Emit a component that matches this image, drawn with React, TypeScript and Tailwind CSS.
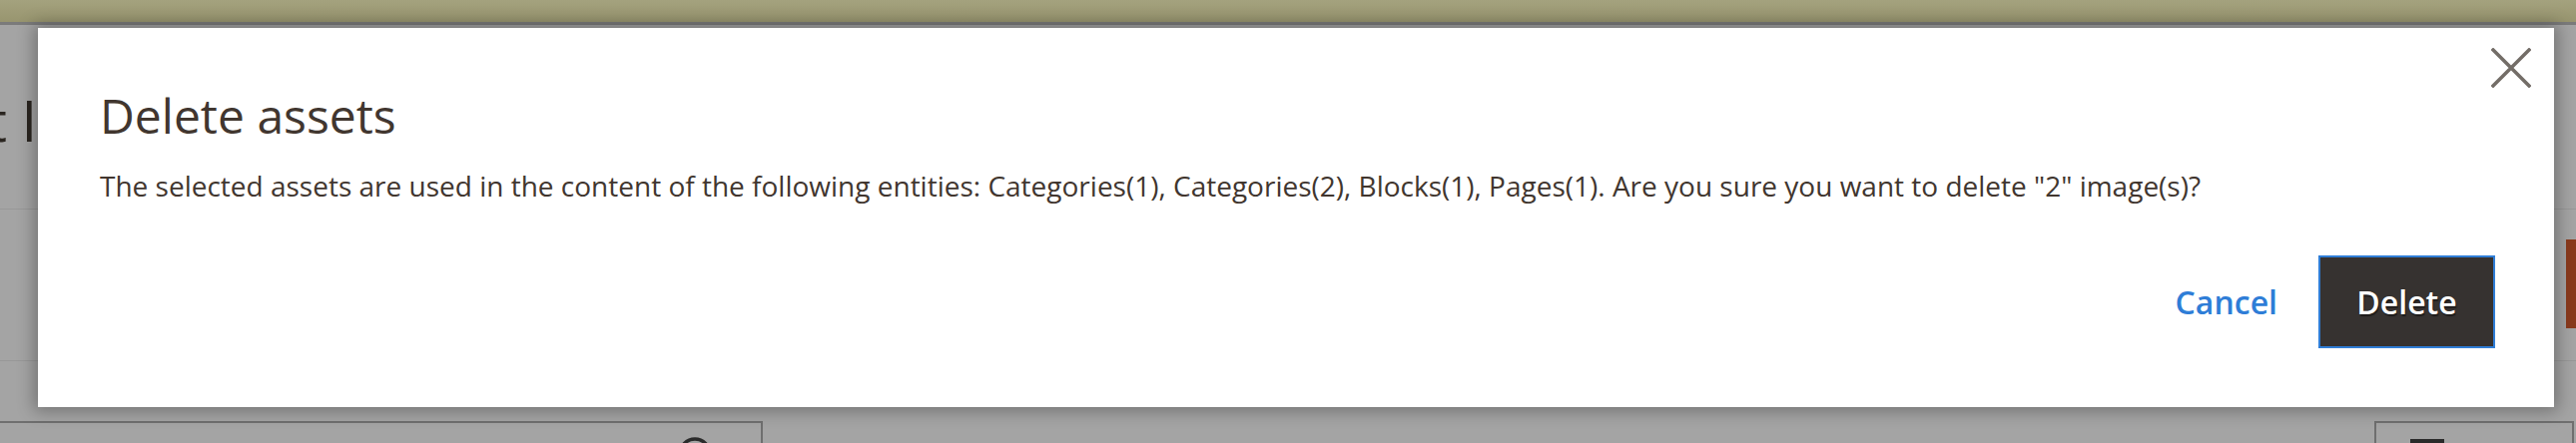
const font = { fontFamily: '"Open Sans", "Liberation Sans", sans-serif' };

const CloseIcon = () => (
  <svg width="40" height="40" viewBox="0 0 40 40" fill="none">
    <path d="M2 2L38 38M38 2L2 38" stroke="#736d67" strokeWidth="3.5" strokeLinecap="square" />
  </svg>
);

const BackgroundPage = () => (
  <div className="flex h-[444px] flex-col overflow-hidden bg-[#a4a4a4]">
    <div className="h-[22px] shrink-0 bg-gradient-to-b from-[#a4a27e] to-[#98956f]" />
    <div className="h-[3px] shrink-0 bg-[#7b7b7b]" />
    <div className="h-[184px] shrink-0 pt-[67px]">
      <p className="-ml-[13px] text-[56px] leading-[56px] text-[#2a2520] whitespace-nowrap">t I</p>
    </div>
    <div className="flex h-[152px] shrink-0 justify-end border-t border-[#989898]">
      <div className="mt-[30px] h-[89px] w-[10px] bg-[#8a3a1c]" />
    </div>
    <div className="h-[61px] shrink-0 border-t border-[#989898]" />
    <div className="flex min-h-0 flex-1 justify-between">
      <div className="flex w-[764px] justify-end border-t-2 border-r-2 border-[#6f6f6f] pr-[48px] pt-[13px]">
        <svg width="36" height="36" viewBox="0 0 36 36" fill="none" className="shrink-0">
          <circle cx="18" cy="18" r="15" stroke="#2b2b2b" strokeWidth="3.5" />
        </svg>
      </div>
      <div className="mr-[2px] w-[200px] border-x-2 border-t-2 border-[#6f6f6f] pl-[34px] pt-[16px]">
        <div className="h-[10px] w-[34px] bg-[#2a2a2a]" />
      </div>
    </div>
  </div>
);

const DeleteModal = () => (
  <div className="absolute left-[38px] top-[28px] flex h-[380px] w-[2520px] flex-col bg-white shadow-[0_0_16px_4px_rgba(0,0,0,0.3)]">
    <button className="absolute right-[23px] top-[20px]" aria-label="Close">
      <CloseIcon />
    </button>
    <div className="pl-[62px] pt-[60px] text-[#41362f]">
      <h1 className="text-[48px] font-normal leading-[56px]">Delete assets</h1>
      <p className="mt-[22px] text-[28px] leading-[40px]">
        The selected assets are used in the content of the following entities: Categories(1), Categories(2), Blocks(1), Pages(1). Are you sure you want to delete "2" image(s)?
      </p>
    </div>
    <div className="mt-auto flex items-center justify-end gap-[41px] pb-[59px] pr-[59px]">
      <button className="text-[32px] font-semibold leading-[40px] text-[#2e7dd7]">Cancel</button>
      <button className="flex h-[93px] w-[177px] items-center justify-center border-2 border-[#2f7dd6] bg-[#363230] text-[32px] font-semibold text-white [text-shadow:1px_2px_1px_rgba(0,0,0,0.45)]">
        Delete
      </button>
    </div>
  </div>
);

export default function App() {
  return (
    <div className="relative h-[444px] w-full overflow-hidden" style={font}>
      <BackgroundPage />
      <DeleteModal />
    </div>
  );
}
